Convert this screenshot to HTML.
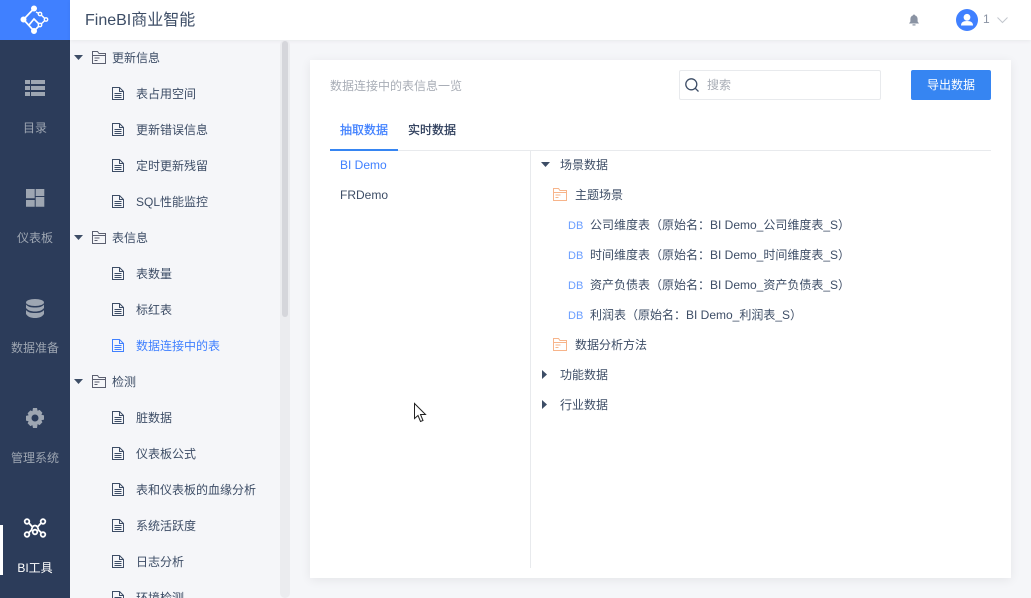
<!DOCTYPE html>
<html lang="zh"><head><meta charset="utf-8"><style>
html,body{margin:0;padding:0;width:1031px;height:598px;overflow:hidden;background:#f5f6f9;font-family:"Liberation Sans","Noto Sans CJK SC",sans-serif;font-size:12px;color:#3d4d66}
#w{position:absolute;left:0;top:0;width:1031px;height:598px;overflow:hidden;contain:strict}
.a{position:absolute;white-space:nowrap}
.t{line-height:18px;height:18px}
.n{width:70px;text-align:center;color:#9ea6b2;left:0}
.db{color:#6a9eff;font-size:11px;left:568px}
svg{position:absolute;overflow:visible}
</style></head><body><div id="w">
<div class="a" style="left:0;top:0;width:70px;height:598px;background:#2c3c5a"></div>
<div class="a" style="left:0;top:0;width:70px;height:40px;background:#4080ff"></div>
<svg style="left:20px;top:5px" width="30" height="30" viewBox="0 0 30 30" fill="none" stroke="#fff" stroke-width="1.400"><path d="M3.500 14.500L14 3.500M3.500 14.500L14 26L20 20L14 14L9 20" stroke-width="1.700"/><path d="M16 7L20 9L26 14.500L20 20"/><circle cx="14" cy="3.500" r="2.300" fill="#fff"/><circle cx="3.500" cy="14.500" r="2.300" fill="#fff"/><circle cx="14" cy="26" r="2.300" fill="#fff"/><circle cx="20" cy="9" r="1.700" fill="#4080ff"/><circle cx="26" cy="14.500" r="1.700" fill="#4080ff"/><circle cx="20" cy="20" r="1.700" fill="#4080ff"/></svg>
<div class="a" style="left:70px;top:0;width:961px;height:40px;background:#fff;box-shadow:0 1px 4px rgba(0,0,0,.06)"></div>
<div class="a" style="left:85px;top:10px;font-size:16px;line-height:22px;color:#3d4d66">FineBI商业智能</div>
<svg style="left:908px;top:14px" width="12" height="12" viewBox="0 0 12 12" fill="#8a93a3"><path d="M6 0.500C6.600 .5 7 .9 7 1.400C8.700 1.900 9.600 3.300 9.600 5V7.500L11 9.500H1L2.400 7.500V5C2.400 3.300 3.300 1.900 5 1.400C5 .9 5.400 .5 6 .5Z"/><rect x="4.500" y="10.300" width="3" height="1.200"/></svg>
<svg style="left:956px;top:9px" width="22" height="22" viewBox="0 0 22 22"><circle cx="11" cy="11" r="11" fill="#4080ff"/><circle cx="11" cy="8.300" r="3.400" fill="#fff"/><path d="M5 16.500C5 13.500 7 12 11 12S17 13.500 17 16.500Z" fill="#fff"/></svg>
<div class="a t" style="left:983px;top:10px;color:#8a93a3">1</div>
<svg style="left:997px;top:17px" width="12" height="7" fill="none" stroke="#c2c6cd"><path d="M.5 .5L5.500 5.500L10.500 .5"/></svg>

<!-- nav -->
<svg style="left:25px;top:80px" width="20" height="16" fill="#9ea6b2"><path d="M0 0h5v4H0zM6 0h14v4H6zM0 6h5v4H0zM6 6h14v4H6zM0 12h5v4H0zM6 12h14v4H6z"/></svg>
<div class="a n t" style="top:119px">目录</div>
<svg style="left:26px;top:189px" width="19" height="18" fill="#9ea6b2"><path d="M0 0h8.700v9.300H0zM9.700 0h8.600v7H9.700zM0 11h8.700v6.700H0zM9.700 8h8.600v9.700H9.700z"/></svg>
<div class="a n t" style="top:229px">仪表板</div>
<svg style="left:26px;top:299px" width="18" height="19" fill="#9ea6b2"><ellipse cx="9" cy="3.500" rx="9" ry="3.500"/><path d="M0 5.500C2 8 5 8.500 9 8.500S16 8 18 5.500V9C16 11.500 13 12.500 9 12.500S2 11.500 0 9ZM0 11C2 13.500 5 14 9 14S16 13.500 18 11V15C16 18 13 19 9 19S2 18 0 15Z"/></svg>
<div class="a n t" style="top:339px">数据准备</div>
<svg style="left:25px;top:408px" width="20" height="20" viewBox="0 0 20 20" fill="#9ea6b2"><path fill-rule="evenodd" d="M8 0h4l.6 2.800 2-.9 2.800 2.800-1 2 2.600.7v4.200l-2.600.7 1 2-2.800 2.800-2-1L12 20H8l-.6-2.900-2 1-2.800-2.800 1-2L1 12.600V7.900l2.600-.7-1-2 2.800-2.800 2 .9zM10 6.500a3.500 3.500 0 1 0 0 7 3.500 3.500 0 0 0 0-7z"/></svg>
<div class="a n t" style="top:449px">管理系统</div>
<div class="a" style="left:0;top:525px;width:3px;height:50px;background:#fff"></div>
<svg style="left:24px;top:517px" width="23" height="23" viewBox="0 0 23 23" fill="none" stroke="#fff" stroke-width="1.800"><path d="M3.500 4.500L9 10.500M18.500 4.500L13 10.500M3.500 17L8 12.500M18.500 17L14 12.500M7.500 13.500C8 10 9.500 8.500 11 8.500S14 10 14.500 13.500"/><circle cx="3" cy="4.500" r="2.300" fill="#2c3c5a"/><circle cx="19" cy="4.500" r="2.300" fill="#2c3c5a"/><circle cx="3" cy="17.500" r="2.300" fill="#2c3c5a"/><circle cx="19" cy="17.500" r="2.300" fill="#2c3c5a"/><circle cx="11" cy="15" r="2.300" fill="#2c3c5a"/></svg>
<div class="a n t" style="top:559px;color:#fff">BI工具</div>

<!-- tree -->
<div class="a" style="left:280px;top:40px;width:10px;height:558px;background:#ebecef;border-radius:5px"></div>
<div class="a" style="left:282px;top:41px;width:6px;height:276px;background:#d5d6db;border-radius:3px"></div>
<svg width="0" height="0" style="left:0;top:0"><defs>
<symbol id="d" viewBox="0 0 12 13"><path d="M.5 .5H7.500L11.500 4.500V12.500H.5Z M7.500 .5V4.500H11.500 M2.500 6.500H9.500M2.500 8.500H9.500M2.500 10.500H9.500" fill="none" stroke="currentColor"/></symbol>
<symbol id="f" viewBox="0 0 14 13"><path d="M.5 12.500V.5H5.500L7 2.500H13.500V12.500Z M.5 4.500H13.500" fill="none" stroke="currentColor"/><path d="M2.500 7H7.500M2.500 9.500H5.500" fill="none" stroke="currentColor"/></symbol>
</defs></svg>

<svg style="left:74px;top:55px" width="9" height="5" fill="#3d4d66"><path d="M0 0H9L4.500 5Z"/></svg>
<svg style="left:92px;top:51px;color:#5b5f70" width="14" height="13"><use href="#f"/></svg>
<div class="a t" style="left:112px;top:49px">更新信息</div>
<svg style="left:112px;top:87px;color:#3d4d66" width="12" height="13"><use href="#d"/></svg>
<div class="a t" style="left:136px;top:85px">表占用空间</div>
<svg style="left:112px;top:123px;color:#3d4d66" width="12" height="13"><use href="#d"/></svg>
<div class="a t" style="left:136px;top:121px">更新错误信息</div>
<svg style="left:112px;top:159px;color:#3d4d66" width="12" height="13"><use href="#d"/></svg>
<div class="a t" style="left:136px;top:157px">定时更新残留</div>
<svg style="left:112px;top:195px;color:#3d4d66" width="12" height="13"><use href="#d"/></svg>
<div class="a t" style="left:136px;top:193px">SQL性能监控</div>

<svg style="left:74px;top:235px" width="9" height="5" fill="#3d4d66"><path d="M0 0H9L4.500 5Z"/></svg>
<svg style="left:92px;top:231px;color:#5b5f70" width="14" height="13"><use href="#f"/></svg>
<div class="a t" style="left:112px;top:229px">表信息</div>
<svg style="left:112px;top:267px;color:#3d4d66" width="12" height="13"><use href="#d"/></svg>
<div class="a t" style="left:136px;top:265px">表数量</div>
<svg style="left:112px;top:303px;color:#3d4d66" width="12" height="13"><use href="#d"/></svg>
<div class="a t" style="left:136px;top:301px">标红表</div>
<svg style="left:112px;top:339px;color:#4080ff" width="12" height="13"><use href="#d"/></svg>
<div class="a t" style="left:136px;top:337px;color:#4080ff">数据连接中的表</div>

<svg style="left:74px;top:379px" width="9" height="5" fill="#3d4d66"><path d="M0 0H9L4.500 5Z"/></svg>
<svg style="left:92px;top:375px;color:#5b5f70" width="14" height="13"><use href="#f"/></svg>
<div class="a t" style="left:112px;top:373px">检测</div>
<svg style="left:112px;top:411px;color:#3d4d66" width="12" height="13"><use href="#d"/></svg>
<div class="a t" style="left:136px;top:409px">脏数据</div>
<svg style="left:112px;top:447px;color:#3d4d66" width="12" height="13"><use href="#d"/></svg>
<div class="a t" style="left:136px;top:445px">仪表板公式</div>
<svg style="left:112px;top:483px;color:#3d4d66" width="12" height="13"><use href="#d"/></svg>
<div class="a t" style="left:136px;top:481px">表和仪表板的血缘分析</div>
<svg style="left:112px;top:519px;color:#3d4d66" width="12" height="13"><use href="#d"/></svg>
<div class="a t" style="left:136px;top:517px">系统活跃度</div>
<svg style="left:112px;top:555px;color:#3d4d66" width="12" height="13"><use href="#d"/></svg>
<div class="a t" style="left:136px;top:553px">日志分析</div>
<svg style="left:112px;top:591px;color:#3d4d66" width="12" height="13"><use href="#d"/></svg>
<div class="a t" style="left:136px;top:589px">环境检测</div>

<!-- card -->
<div class="a" style="left:310px;top:60px;width:701px;height:518px;background:#fff;box-shadow:0 2px 10px rgba(0,0,0,.07)"></div>
<div class="a t" style="left:330px;top:77px;color:#a8adb6">数据连接中的表信息一览</div>
<div class="a" style="left:679px;top:70px;width:200px;height:28px;border:1px solid #e8eaed;border-radius:2px"></div>
<svg style="left:685px;top:78px" width="14" height="14" fill="none" stroke="#3d4d66" stroke-width="1.300"><circle cx="6.300" cy="6.300" r="5.500"/><path d="M10.300 10.300L13.500 13.500"/></svg>
<div class="a t" style="left:707px;top:76px;color:#a8adb6">搜索</div>
<div class="a" style="left:911px;top:70px;width:80px;height:30px;line-height:30px;text-align:center;background:#3685f2;color:#fff;border-radius:2px">导出数据</div>
<div class="a t" style="left:340px;top:121px;color:#4080ff;-webkit-text-stroke:.25px #4080ff">抽取数据</div>
<div class="a t" style="left:408px;top:121px;color:#2c3c5a;-webkit-text-stroke:.25px #2c3c5a">实时数据</div>
<div class="a" style="left:330px;top:150px;width:661px;height:1px;background:#e8eaed"></div>
<div class="a" style="left:330px;top:149px;width:68px;height:2px;background:#3685f2"></div>
<div class="a" style="left:530px;top:151px;width:1px;height:417px;background:#e8eaed"></div>
<div class="a t" style="left:340px;top:156px;color:#4080ff">BI Demo</div>
<div class="a t" style="left:340px;top:186px">FRDemo</div>

<svg style="left:541px;top:162px" width="9" height="5" fill="#3d4d66"><path d="M0 0H9L4.500 5Z"/></svg>
<div class="a t" style="left:560px;top:156px">场景数据</div>
<svg style="left:553px;top:188px;color:#f7b48a" width="14" height="13"><use href="#f"/></svg>
<div class="a t" style="left:575px;top:186px">主题场景</div>
<div class="a t db" style="top:217px">DB</div>
<div class="a t" style="left:590px;top:216px">公司维度表（原始名：BI Demo_公司维度表_S）</div>
<div class="a t db" style="top:247px">DB</div>
<div class="a t" style="left:590px;top:246px">时间维度表（原始名：BI Demo_时间维度表_S）</div>
<div class="a t db" style="top:277px">DB</div>
<div class="a t" style="left:590px;top:276px">资产负债表（原始名：BI Demo_资产负债表_S）</div>
<div class="a t db" style="top:307px">DB</div>
<div class="a t" style="left:590px;top:306px">利润表（原始名：BI Demo_利润表_S）</div>
<svg style="left:553px;top:338px;color:#f7b48a" width="14" height="13"><use href="#f"/></svg>
<div class="a t" style="left:575px;top:336px">数据分析方法</div>
<svg style="left:542px;top:370px" width="5" height="9" fill="#3d4d66"><path d="M0 0V9L5 4.500Z"/></svg>
<div class="a t" style="left:560px;top:366px">功能数据</div>
<svg style="left:542px;top:400px" width="5" height="9" fill="#3d4d66"><path d="M0 0V9L5 4.500Z"/></svg>
<div class="a t" style="left:560px;top:396px">行业数据</div>

<svg style="left:414px;top:403px" width="13" height="20" fill="#fff" stroke="#222" stroke-width="1"><path d="M.5 .5V15.500L4 12.500L6.500 18.500L9 17.500L6.500 11.500H11.500Z"/></svg>
</div></body></html>
